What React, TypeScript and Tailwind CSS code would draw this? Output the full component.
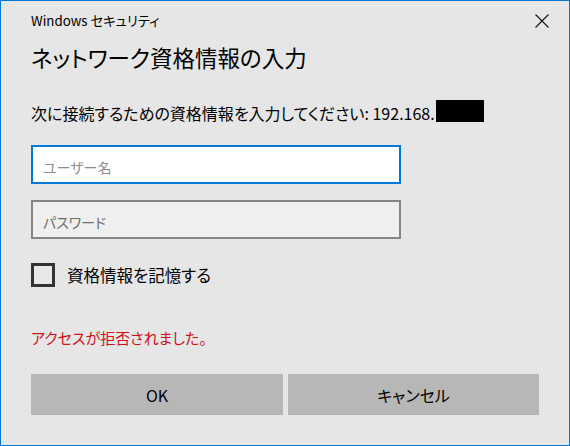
import { useState } from "react";

const font =
  "font-['Segoe_UI','Noto_Sans_CJK_JP','Noto_Sans',sans-serif] [font-feature-settings:'palt']";

export default function App() {
  const [user, setUser] = useState("");
  const [pass, setPass] = useState("");
  const [remember, setRemember] = useState(false);

  return (
    <div
      className={`flex h-[446px] w-[570px] flex-col border border-[#0078d7] bg-[#e6e6e6] text-black ${font}`}
    >
      {/* Title bar */}
      <div className="flex h-[40px] items-center justify-between pl-[30px] pr-[20px]">
        <span className="text-[13.3px] leading-none">Windows セキュリティ</span>
        <button className="flex h-[14px] w-[14px] items-center justify-center">
          <svg width="14" height="14" viewBox="0 0 14 14" fill="none" stroke="#111" strokeWidth={1.1}>
            <path d="M0.5 0.5 13.5 13.5M13.5 0.5 0.5 13.5" />
          </svg>
        </button>
      </div>

      <div className="flex flex-col px-[30px]">
        {/* Heading */}
        <h1 className="-mt-[2px] text-[22.5px] leading-[36px] font-normal">ネットワーク資格情報の入力</h1>

        {/* Target */}
        <div className="mt-[25px] flex h-[24px] items-start">
          <span className="pt-[1px] text-[16px] leading-[24px]">
            次に接続するための資格情報を入力してください: 192.168.
          </span>
          <span className="ml-[1px] h-[22px] w-[48px] bg-black" />
        </div>

        {/* Inputs */}
        <input
          value={user}
          onChange={(e) => setUser(e.target.value)}
          placeholder="ユーザー名"
          className="mt-[21px] h-[39px] w-[370px] border-2 border-[#0078d7] bg-white pl-[10px] pt-[4px] text-[14px] outline-none placeholder:text-[#8c8c8c]"
        />
        <input
          type="password"
          value={pass}
          onChange={(e) => setPass(e.target.value)}
          placeholder="パスワード"
          className="mt-[16px] h-[39px] w-[370px] border-2 border-[#858585] bg-[#efefef] pl-[10px] pt-[4px] text-[14px] outline-none placeholder:text-[#6e6e6e]"
        />

        {/* Remember */}
        <label className="mt-[24px] flex h-[24px] cursor-pointer items-center gap-[12px]">
          <input
            type="checkbox"
            checked={remember}
            onChange={(e) => setRemember(e.target.checked)}
            className="peer sr-only"
          />
          <span className="h-[24px] w-[24px] border-[3px] border-[#333] bg-[#e8e8e8]" />
          <span className="text-[16.5px] leading-[24px]">資格情報を記憶する</span>
        </label>

        {/* Error */}
        <p className="mt-[40px] text-[15px] leading-[22px] text-[#d0111b]">アクセスが拒否されました。</p>

        {/* Buttons */}
        <div className="mt-[25px] flex gap-[5px]">
          <button className="h-[41px] w-[252px] bg-[#b7b7b7] text-[16px]">OK</button>
          <button className="h-[41px] w-[251px] bg-[#b7b7b7] text-[16px]">キャンセル</button>
        </div>
      </div>
    </div>
  );
}
